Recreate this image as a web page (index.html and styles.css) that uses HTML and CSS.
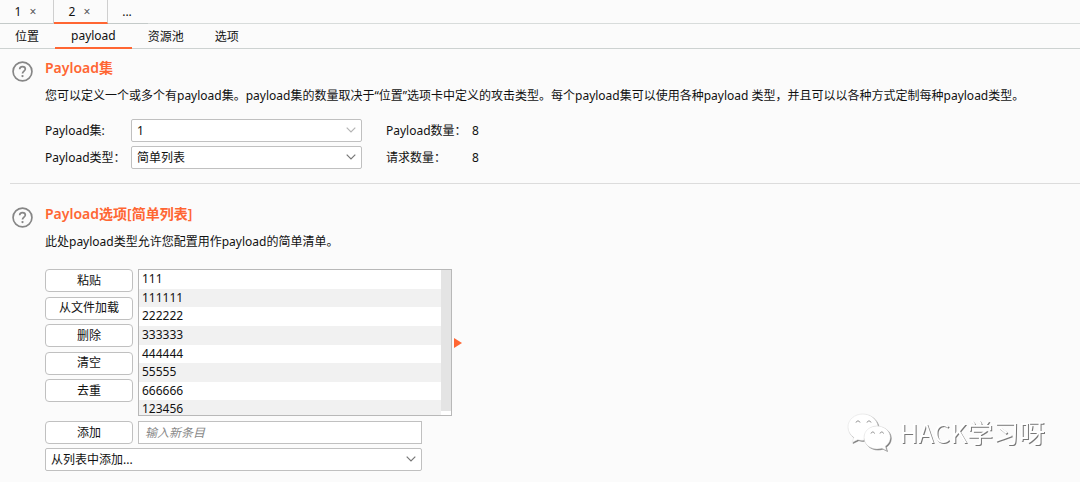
FILE: index.html
```
<!DOCTYPE html>
<html lang="zh-CN">
<head>
<meta charset="utf-8">
<title>Payload</title>
<link rel="stylesheet" href="styles.css">
</head>
<body>
<svg class="defs" aria-hidden="true">
  <symbol id="help" viewBox="0 0 20 20">
    <circle cx="10" cy="10" r="9" fill="none" stroke="#868686" stroke-width="1.6"/>
    <path d="M7.300 7.900C7.300 6.300 8.500 5.300 10 5.300s2.700 1 2.700 2.400c0 1.900-2.700 2.100-2.700 4.300" fill="none" stroke="#868686" stroke-width="1.6"/>
    <circle cx="10" cy="14.400" r="1.100" fill="#868686"/>
  </symbol>
  <symbol id="chevron" viewBox="0 0 10 6">
    <path d="M0.700 0.700 5 5 9.300 0.700" fill="none" stroke="currentColor" stroke-width="1.200"/>
  </symbol>
</svg>

<nav class="sessions">
  <button class="session" type="button">1 <span class="close">×</span></button>
  <button class="session session-active" type="button">2 <span class="close">×</span></button>
  <button class="session session-more" type="button">...</button>
</nav>
<nav class="tabs">
  <button class="tab" type="button">位置</button>
  <button class="tab tab-active" type="button">payload</button>
  <button class="tab" type="button">资源池</button>
  <button class="tab" type="button">选项</button>
</nav>

<main>
  <section class="section">
    <svg class="help"><use href="#help"/></svg>
    <div class="content">
      <h2>Payload集</h2>
      <p>您可以定义一个或多个有payload集。payload集的数量取决于“位置”选项卡中定义的攻击类型。每个payload集可以使用各种payload 类型，并且可以以各种方式定制每种payload类型。</p>
      <div class="settings">
        <label for="set">Payload集:</label>
        <div class="combo">
          <select id="set"><option>1</option></select>
          <svg class="chevron chevron-light"><use href="#chevron"/></svg>
        </div>
        <span>Payload数量：</span><span>8</span>
        <label for="type">Payload类型：</label>
        <div class="combo">
          <select id="type"><option>简单列表</option></select>
          <svg class="chevron"><use href="#chevron"/></svg>
        </div>
        <span>请求数量：</span><span>8</span>
      </div>
    </div>
  </section>
  <hr>
  <section class="section">
    <svg class="help"><use href="#help"/></svg>
    <div class="content">
      <h2>Payload选项[简单列表]</h2>
      <p>此处payload类型允许您配置用作payload的简单清单。</p>
      <div class="editor">
        <div class="actions">
          <button class="btn" type="button">粘贴</button>
          <button class="btn" type="button">从文件加载</button>
          <button class="btn" type="button">删除</button>
          <button class="btn" type="button">清空</button>
          <button class="btn" type="button">去重</button>
        </div>
        <div class="list">
          <ul class="items">
            <li>111</li><li>111111</li><li>222222</li><li>333333</li>
            <li>444444</li><li>55555</li><li>666666</li><li>123456</li>
          </ul>
          <div class="track"></div>
        </div>
        <svg class="marker" viewBox="0 0 8 10"><path d="M0 0 8 5 0 10z" fill="#ff6633"/></svg>
      </div>
      <div class="add">
        <button class="btn" type="button">添加</button>
        <input type="text" placeholder="输入新条目" aria-label="输入新条目">
      </div>
      <div class="combo combo-wide">
        <select aria-label="从列表中添加"><option>从列表中添加...</option></select>
        <svg class="chevron"><use href="#chevron"/></svg>
      </div>
    </div>
  </section>
</main>

<div class="watermark">
  <svg viewBox="0 0 44 38">
    <path d="M16 1C7.500 1 1 6.700 1 14c0 4.500 2.200 8 5.800 10.500L5 29.500l5.800-2.800c2 .6 4 .8 6.200.6A14 14 0 0 1 31 13C29.800 6 23.500 1 16 1z"/>
    <path d="M30 13c-7.400 0-13 5-13 11.500S22.600 36 30 36c1.800 0 3.400-.3 5-.8l4.500 2.300-1.200-4.200c3-2 5-5.200 5-8.800C43.300 18 37.400 13 30 13z"/>
    <path class="eyes" d="M9 9.500c.5-2 3.500-2 4 0M20 9.500c.5-2 3.500-2 4 0M24 20.500c.5-2 3-2 3.500 0M33 20.500c.5-2 3-2 3.500 0"/>
  </svg>
  <span>HACK学习呀</span>
</div>
</body>
</html>
```
FILE: styles.css
```
* { box-sizing: border-box; }
body {
  margin: 0;
  background: #fbfbfb;
  color: #111;
  font: 12px/18px "Noto Sans", "Noto Sans CJK SC", sans-serif;
}
button, input, select { font: inherit; color: inherit; margin: 0; }
.defs { display: none; }

.sessions { display: flex; height: 24px; border-bottom: 1px solid #d8dcdb; }
.session {
  width: 54px;
  height: 24px;
  padding: 0 2px 0 0;
  background: none;
  border: 0;
  border-right: 1px solid #cfcfcf;
  border-bottom: 1px solid #c4cac9;
}
.session-active { padding-top: 1px; border-bottom: 2px solid #ff6633; }
.session-more { width: 40px; border-right: 0; }
.close { margin-left: 5px; color: #555; }

.tabs { display: flex; gap: 1px; height: 25px; border-bottom: 1px solid #cdd2d1; }
.tab { height: 25px; padding: 0 15px; background: none; border: 0; }
.tab-active { padding: 1px 16px 0; border-bottom: 2px solid #ff6633; }

.section { display: flex; gap: 12px; padding: 9px 12px 0; }
.help { flex: none; width: 21px; height: 21px; margin-top: 3px; }
.content { flex: 1; min-width: 0; }
h2 { margin: 0; color: #ff6633; font-size: 14px; line-height: 20px; font-weight: 600; }
p { margin: 9px 0 0; }

.settings {
  display: grid;
  grid-template-columns: 86px 231px 86px auto;
  row-gap: 4px;
  align-items: center;
  margin-top: 14px;
}
.settings > span:nth-child(4n+3) { margin-left: 24px; white-space: nowrap; }
.settings > span:nth-child(4n) { margin-left: 24px; }
.combo { position: relative; }
.combo select {
  display: block;
  width: 100%;
  height: 23px;
  padding: 0 5px;
  appearance: none;
  background: #fff;
  border: 1px solid #c0c0c0;
  border-radius: 2px;
}
.chevron { position: absolute; right: 6px; top: 8px; width: 10px; height: 6px; color: #777; pointer-events: none; }
.chevron-light { color: #b4b4b4; }
hr { margin: 14px 0 11px 10px; border: 0; border-top: 1px solid #dcdcdc; }

.editor { display: flex; align-items: center; margin-top: 18px; }
.actions { display: flex; flex-direction: column; justify-content: space-between; align-self: flex-start; height: 133px; }
.btn {
  width: 88px;
  height: 23px;
  padding: 0;
  background: #fff;
  border: 1px solid #c0c0c0;
  border-radius: 4px;
}
.list { display: flex; width: 314px; height: 147px; margin-left: 5px; overflow: hidden; background: #fff; border: 1px solid #b8b8b8; }
.items { flex: 1; display: grid; grid-template-rows: repeat(8, minmax(0, 1fr)); height: 149px; margin: 0; padding: 0; list-style: none; }
.items li { padding-left: 3px; line-height: 18px; }
.items li:nth-child(even) { background: #f1f1f1; }
.track { width: 10px; height: 141px; background: #e4e4e4; }
.marker { width: 8px; height: 10px; margin-left: 2px; }

.add { display: flex; gap: 5px; width: 377px; margin: 5px 0 4px; }
.add input { flex: 1; min-width: 0; height: 23px; padding: 0 6px; background: #fff; border: 1px solid #c0c0c0; }
.add input::placeholder { color: #888; font-style: italic; opacity: 1; }
.combo-wide { width: 377px; }

.watermark {
  position: absolute;
  right: 35px;
  bottom: 31px;
  display: flex;
  align-items: center;
  gap: 8px;
  color: #fff;
  font: 26px/38px "Noto Sans CJK SC", sans-serif;
  filter: drop-shadow(1px 1px 0 #777);
}
.watermark svg { width: 44px; height: 38px; fill: #fff; stroke: #ddd; stroke-width: 0.5; }
.watermark .eyes { fill: none; stroke: #888; stroke-width: 1; }
```
